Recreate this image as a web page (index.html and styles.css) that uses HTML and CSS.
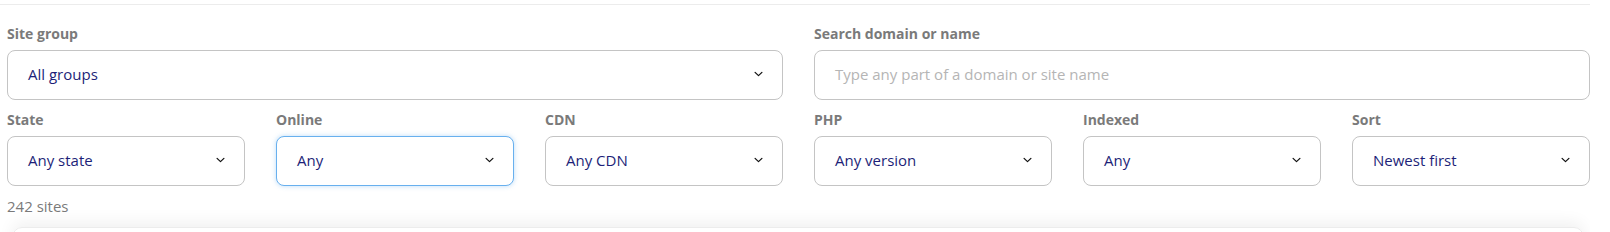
FILE: index.html
```html
<!DOCTYPE html>
<html>
<head>
<meta charset="utf-8">
<link rel="stylesheet" href="styles.css">
</head>
<body>
<div class="page">
  <div class="topline"></div>
  <div class="filters">
    <div class="field span3">
      <label class="label">Site group</label>
      <div class="select"><span class="value">All groups</span><svg class="chev" viewBox="0 0 10 6" width="9" height="6"><path d="M1.2 1.2l3.8 3.6 3.8-3.6" fill="none" stroke="#111" stroke-width="1.4" stroke-linecap="round" stroke-linejoin="round"/></svg></div>
    </div>
    <div class="field span3">
      <label class="label">Search domain or name</label>
      <div class="select"><span class="placeholder">Type any part of a domain or site name</span></div>
    </div>
    <div class="field">
      <label class="label">State</label>
      <div class="select"><span class="value">Any state</span><svg class="chev" viewBox="0 0 10 6" width="9" height="6"><path d="M1.2 1.2l3.8 3.6 3.8-3.6" fill="none" stroke="#111" stroke-width="1.4" stroke-linecap="round" stroke-linejoin="round"/></svg></div>
    </div>
    <div class="field">
      <label class="label">Online</label>
      <div class="select focus"><span class="value">Any</span><svg class="chev" viewBox="0 0 10 6" width="9" height="6"><path d="M1.2 1.2l3.8 3.6 3.8-3.6" fill="none" stroke="#111" stroke-width="1.4" stroke-linecap="round" stroke-linejoin="round"/></svg></div>
    </div>
    <div class="field">
      <label class="label">CDN</label>
      <div class="select"><span class="value">Any CDN</span><svg class="chev" viewBox="0 0 10 6" width="9" height="6"><path d="M1.2 1.2l3.8 3.6 3.8-3.6" fill="none" stroke="#111" stroke-width="1.4" stroke-linecap="round" stroke-linejoin="round"/></svg></div>
    </div>
    <div class="field">
      <label class="label">PHP</label>
      <div class="select"><span class="value">Any version</span><svg class="chev" viewBox="0 0 10 6" width="9" height="6"><path d="M1.2 1.2l3.8 3.6 3.8-3.6" fill="none" stroke="#111" stroke-width="1.4" stroke-linecap="round" stroke-linejoin="round"/></svg></div>
    </div>
    <div class="field">
      <label class="label">Indexed</label>
      <div class="select"><span class="value">Any</span><svg class="chev" viewBox="0 0 10 6" width="9" height="6"><path d="M1.2 1.2l3.8 3.6 3.8-3.6" fill="none" stroke="#111" stroke-width="1.4" stroke-linecap="round" stroke-linejoin="round"/></svg></div>
    </div>
    <div class="field">
      <label class="label">Sort</label>
      <div class="select"><span class="value">Newest first</span><svg class="chev" viewBox="0 0 10 6" width="9" height="6"><path d="M1.2 1.2l3.8 3.6 3.8-3.6" fill="none" stroke="#111" stroke-width="1.4" stroke-linecap="round" stroke-linejoin="round"/></svg></div>
    </div>
  </div>
  <div class="count">242 sites</div>
  <div class="card"></div>
</div>
</body>
</html>
```

FILE: styles.css
```css
html, body {
  margin: 0;
  padding: 0;
  background: #fff;
  font-family: "Open Sans", "Liberation Sans", sans-serif;
}
.page {
  width: 1590px;
  overflow: hidden;
  height: 232px;
}
.topline {
  height: 4px;
  border-bottom: 1px solid #ececec;
}
.filters {
  display: grid;
  grid-template-columns: repeat(6, 1fr);
  column-gap: 31px;
  row-gap: 11px;
  padding: 20px 0 0 7px;
}
.span3 {
  grid-column: span 3;
}
.field {
  display: flex;
  flex-direction: column;
  gap: 7px;
}
.label {
  font-size: 14px;
  line-height: 18px;
  font-weight: 700;
  color: #7a7a7a;
}
.select {
  height: 50px;
  box-sizing: border-box;
  border: 1px solid #c4c4c4;
  border-radius: 8px;
  display: flex;
  align-items: center;
  justify-content: space-between;
  padding: 0 19px 2px 20px;
  font-size: 15px;
  background: #fff;
}
.select.focus {
  border-color: #68b0ee;
  box-shadow: 0 0 5px rgba(104, 176, 238, 0.45);
}
.value {
  color: #1d1f78;
}
.placeholder {
  color: #b5b5b5;
}
.chev {
  display: block;
}
.count {
  margin: 10px 0 0 7px;
  font-size: 15px;
  line-height: 20px;
  color: #7a7a7a;
}
.card {
  margin: 11px 6px 0 12px;
  height: 40px;
  border: 1px solid #ececec;
  border-radius: 10px;
  box-shadow: 0 -5px 16px rgba(0, 0, 0, 0.06);
}
```
